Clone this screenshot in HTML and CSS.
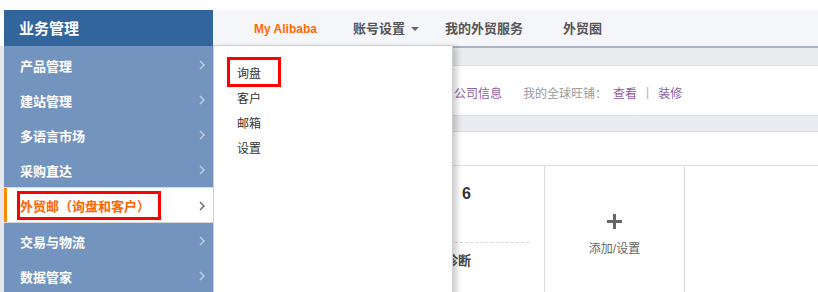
FILE: index.html
```html
<!DOCTYPE html>
<html lang="zh-CN">
<head>
    <meta charset="UTF-8">
    <title>业务管理 - My Alibaba</title>
    <link rel="stylesheet" href="styles.css">
</head>
<body>
    <div class="page">
        <header class="topbar">
            <div class="brand">业务管理</div>
            <nav class="topnav">
                <a class="nav-item is-current">My Alibaba</a>
                <a class="nav-item has-menu">账号设置<i class="caret"></i></a>
                <a class="nav-item">我的外贸服务</a>
                <a class="nav-item">外贸圈</a>
            </nav>
        </header>
        <div class="layout">
            <aside class="sidebar">
                <ul class="side-menu">
                    <li class="side-item"><span>产品管理</span><svg class="chev" width="6" height="10" viewBox="0 0 6 10"><polyline points="1,1 5,5 1,9"/></svg></li>
                    <li class="side-item"><span>建站管理</span><svg class="chev" width="6" height="10" viewBox="0 0 6 10"><polyline points="1,1 5,5 1,9"/></svg></li>
                    <li class="side-item"><span>多语言市场</span><svg class="chev" width="6" height="10" viewBox="0 0 6 10"><polyline points="1,1 5,5 1,9"/></svg></li>
                    <li class="side-item"><span>采购直达</span><svg class="chev" width="6" height="10" viewBox="0 0 6 10"><polyline points="1,1 5,5 1,9"/></svg></li>
                    <li class="side-item is-active"><span>外贸邮（询盘和客户）</span><svg class="chev" width="6" height="10" viewBox="0 0 6 10"><polyline points="1,1 5,5 1,9"/></svg></li>
                    <li class="side-item"><span>交易与物流</span><svg class="chev" width="6" height="10" viewBox="0 0 6 10"><polyline points="1,1 5,5 1,9"/></svg></li>
                    <li class="side-item"><span>数据管家</span><svg class="chev" width="6" height="10" viewBox="0 0 6 10"><polyline points="1,1 5,5 1,9"/></svg></li>
                </ul>
            </aside>
            <main class="main">
                <div class="flyout">
                    <a class="flyout-item is-marked">询盘</a>
                    <a class="flyout-item">客户</a>
                    <a class="flyout-item">邮箱</a>
                    <a class="flyout-item">设置</a>
                </div>
                <div class="tips"></div>
                <div class="shop-row">
                    <a class="link company">公司信息</a>
                    <span class="muted">我的全球旺铺：</span>
                    <a class="link view">查看</a>
                    <span class="sep">|</span>
                    <a class="link">装修</a>
                </div>
                <div class="band"></div>
                <div class="blank"></div>
                <div class="cards">
                    <div class="card card-stat">
                        <div class="stat-num">6</div>
                        <div class="stat-line"></div>
                        <div class="stat-label">健康诊断</div>
                    </div>
                    <div class="card card-add">
                        <svg class="plus" width="15" height="15" viewBox="0 0 15 15"><rect x="0" y="6" width="15" height="3"/><rect x="6" y="0" width="3" height="15"/></svg>
                        <div class="add-text">添加/设置</div>
                    </div>
                    <div class="card"></div>
                </div>
            </main>
        </div>
    </div>
</body>
</html>
```

FILE: styles.css
```css
body {
    margin: 0;
    font-family: "Liberation Sans", "Noto Sans CJK SC", sans-serif;
    background-color: #fff;
    overflow: hidden;
}
a {
    text-decoration: none;
    cursor: pointer;
}
ul {
    margin: 0;
    padding: 0;
    list-style: none;
}
.page {
    padding-top: 10px;
}
.topbar {
    display: flex;
    height: 36px;
}
.brand {
    flex: none;
    width: 209px;
    height: 36px;
    margin-left: 4px;
    padding: 2px 0 0 15px;
    box-sizing: border-box;
    background-color: #31659b;
    color: #fff;
    font-size: 15px;
    font-weight: bold;
    line-height: 34px;
}
.topnav {
    flex: 1;
    display: flex;
    padding: 2px 0 0 21px;
    box-sizing: border-box;
    background-color: #f5f6fa;
}
.nav-item {
    padding: 0 20px;
    color: #555;
    font-size: 13px;
    font-weight: bold;
    line-height: 34px;
    display: flex;
    align-items: center;
}
.nav-item.is-current {
    padding-right: 16px;
    color: #ff6a00;
    font-size: 12px;
}
.nav-item.has-menu {
    padding-right: 6px;
}
.caret {
    margin-left: 6px;
    border-left: 4px solid transparent;
    border-right: 4px solid transparent;
    border-top: 4px solid #666;
}
.layout {
    display: flex;
    height: 246px;
}
.sidebar {
    flex: none;
    width: 209px;
    border-left: 4px solid #e6e7ec;
    padding-top: 1px;
    background-color: #7394be;
}
.side-item {
    height: 35px;
    padding: 1px 8px 0 16px;
    box-sizing: border-box;
    display: flex;
    align-items: center;
    justify-content: space-between;
    color: #fff;
    font-size: 13px;
    font-weight: bold;
}
.chev polyline {
    fill: none;
    stroke: #c3cfe1;
    stroke-width: 1.4;
}
.side-item.is-active {
    position: relative;
    height: 36px;
    background-color: #fff;
    border-top: 1px solid #d9d9d9;
    border-bottom: 1px solid #d9d9d9;
    box-shadow: inset 3px 0 0 #ff8a00;
    color: #ff6600;
}
.side-item.is-active .chev polyline {
    stroke: #666;
}
.side-item.is-active::after {
    content: "";
    position: absolute;
    left: 13px;
    top: 3px;
    width: 144px;
    height: 29px;
    box-sizing: border-box;
    border: 3px solid #f00;
}
.main {
    flex: 1;
    min-width: 0;
    position: relative;
}
.flyout {
    position: absolute;
    left: 0;
    top: -1px;
    width: 240px;
    height: 260px;
    box-sizing: border-box;
    padding-top: 16px;
    background-color: #fff;
    border: 1px solid #cfcfcf;
    box-shadow: 4px 2px 6px rgba(0, 0, 0, 0.2);
    z-index: 10;
}
.flyout-item {
    display: block;
    height: 25px;
    line-height: 25px;
    padding-left: 23px;
    color: #333;
    font-size: 12px;
}
.flyout-item.is-marked {
    position: relative;
}
.flyout-item.is-marked::after {
    content: "";
    position: absolute;
    left: 13px;
    top: -5px;
    width: 54px;
    height: 30px;
    box-sizing: border-box;
    border: 3px solid #f00;
}
.tips {
    height: 17px;
    border-top: 2px solid #a8b2c3;
    border-bottom: 1px solid #dcdde2;
    background-color: #ebecf0;
}
.shop-row {
    height: 46px;
    padding: 3px 0 0 241px;
    display: flex;
    align-items: center;
    border-bottom: 1px solid #dddee2;
    font-size: 12px;
}
.link {
    color: #8e5d9f;
}
.company {
    margin-right: 21px;
}
.muted {
    color: #999;
}
.view {
    margin-left: 6px;
}
.sep {
    margin: 0 9px;
    color: #b5b5a0;
}
.band {
    height: 15px;
    background-color: #ebecf0;
    border-bottom: 1px solid #dddee2;
}
.blank {
    height: 33px;
    border-bottom: 1px solid #dddee2;
}
.cards {
    display: flex;
    height: 130px;
    padding-left: 192px;
}
.card {
    flex: none;
    width: 139px;
    border-right: 1px solid #ddd;
}
.card:last-child {
    border-right: none;
}
.stat-num {
    margin: 19px 0 0 57px;
    height: 18px;
    line-height: 18px;
    color: #333;
    font-size: 16px;
    font-weight: bold;
}
.stat-line {
    margin: 39px 0 0 50px;
    width: 74px;
    border-top: 1px dashed #d5d5d5;
}
.stat-label {
    margin-top: 9px;
    padding-left: 14px;
    line-height: 18px;
    color: #444;
    font-size: 13px;
    font-weight: bold;
}
.card-add {
    display: flex;
    flex-direction: column;
    align-items: center;
}
.plus {
    margin-top: 48px;
    fill: #666;
}
.add-text {
    margin-top: 11px;
    line-height: 18px;
    color: #666;
    font-size: 12px;
}
```
